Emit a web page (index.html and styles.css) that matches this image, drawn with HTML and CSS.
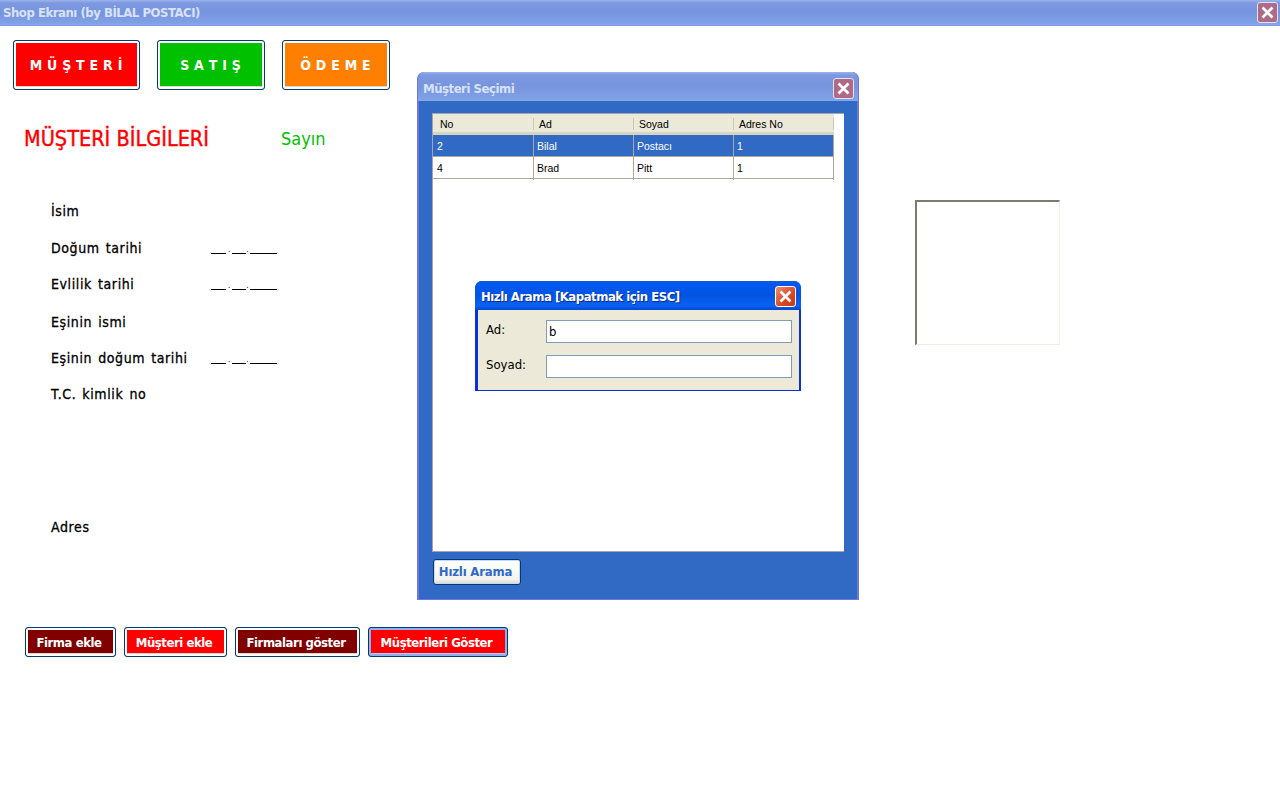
FILE: index.html
```html
<!DOCTYPE html>
<html>
<head>
  <title>Shop Ekranı</title>
  <meta charset="utf-8">
  <link rel="stylesheet" href="styles.css">
</head>
<body>
  <div class="titlebar inactive main-title">
    <span class="title-text">Shop Ekranı (by BİLAL POSTACI)</span>
    <span class="close-btn faded"><svg viewBox="0 0 12 12"><path d="M2 2l8 8M10 2l-8 8"/></svg></span>
  </div>

  <div class="tabs">
    <div class="btn tab red">M Ü Ş T E R İ</div>
    <div class="btn tab green">S A T I Ş</div>
    <div class="btn tab orange">Ö D E M E</div>
  </div>

  <div class="heading">
    <div class="heading-title">MÜŞTERİ BİLGİLERİ</div>
    <div class="heading-hello">Sayın</div>
  </div>

  <div class="form">
    <div class="form-row r1"><span class="label">İsim</span></div>
    <div class="form-row r2"><span class="label">Doğum tarihi</span><span class="date"><i></i>.<i></i>.<i class="year"></i></span></div>
    <div class="form-row r3"><span class="label">Evlilik tarihi</span><span class="date"><i></i>.<i></i>.<i class="year"></i></span></div>
    <div class="form-row r4"><span class="label">Eşinin ismi</span></div>
    <div class="form-row r5"><span class="label">Eşinin doğum tarihi</span><span class="date"><i></i>.<i></i>.<i class="year"></i></span></div>
    <div class="form-row r6"><span class="label">T.C. kimlik no</span></div>
    <div class="form-row r7"><span class="label">Adres</span></div>
  </div>

  <div class="actions">
    <div class="btn small maroon w91">Firma ekle</div>
    <div class="btn small red w103">Müşteri ekle</div>
    <div class="btn small maroon w125">Firmaları göster</div>
    <div class="btn small red w140 focused">Müşterileri Göster</div>
  </div>

  <div class="photo"></div>

  <div class="window select-window">
    <div class="titlebar inactive">
      <span class="title-text">Müşteri Seçimi</span>
      <span class="close-btn faded"><svg viewBox="0 0 12 12"><path d="M2 2l8 8M10 2l-8 8"/></svg></span>
    </div>
    <div class="select-body">
      <div class="grid-panel">
        <div class="grid-row grid-head">
          <div>No</div><div>Ad</div><div>Soyad</div><div>Adres No</div>
        </div>
        <div class="grid-row grid-cells selected">
          <div>2</div><div>Bilal</div><div>Postacı</div><div>1</div>
        </div>
        <div class="grid-row grid-cells">
          <div>4</div><div>Brad</div><div>Pitt</div><div>1</div>
        </div>
      </div>
      <div class="search-btn">Hızlı Arama</div>
    </div>
  </div>

  <div class="window search-window">
    <div class="titlebar active">
      <span class="title-text">Hızlı Arama [Kapatmak için ESC]</span>
      <span class="close-btn hot"><svg viewBox="0 0 12 12"><path d="M2 2l8 8M10 2l-8 8"/></svg></span>
    </div>
    <div class="search-body">
      <div class="search-row"><label>Ad:</label><div class="input">b</div></div>
      <div class="search-row"><label>Soyad:</label><div class="input"></div></div>
    </div>
  </div>
</body>
</html>
```

FILE: styles.css
```css
html, body {
  margin: 0;
  padding: 0;
}

body {
  position: relative;
  width: 1280px;
  height: 800px;
  overflow: hidden;
  background: #fff;
  font-family: "DejaVu Sans Condensed", "DejaVu Sans", sans-serif;
  font-size: 13px;
  color: #000;
}

/* title bars */
.titlebar {
  display: flex;
  flex-shrink: 0;
  align-items: center;
  justify-content: space-between;
  box-sizing: border-box;
}

.inactive {
  background: linear-gradient(#9db4ec 0, #7d98e0 3px, #7794de 50%, #7fa0e6 90%, #8aa6e8 100%);
  color: #d8e2f8;
}

.active {
  background: linear-gradient(#0a5ae6 0, #0058ee 4px, #0054e3 50%, #0a62f2 85%, #0348d0 100%);
  color: #fff;
}

.main-title {
  height: 26px;
  padding: 0 2px 1px 3px;
  border-bottom: 1px solid #7f9be2;
}

.title-text {
  font-weight: bold;
  font-size: 13px;
  letter-spacing: -0.47px;
}

.close-btn {
  display: flex;
  align-items: center;
  justify-content: center;
  box-sizing: border-box;
  width: 21px;
  height: 21px;
  border: 1px solid #dfe4f6;
  border-radius: 3px;
}

.close-btn svg {
  width: 15px;
  height: 15px;
  fill: none;
  stroke: #fff;
  stroke-width: 2.2;
}

.faded {
  background: #b06a88;
}

.hot {
  background: linear-gradient(135deg, #ea8f72, #d9461f 60%, #c23a18);
  border-color: #fff;
}

/* buttons */
.btn {
  display: flex;
  align-items: center;
  justify-content: center;
  box-sizing: border-box;
  border: 1px solid #003c74;
  border-radius: 3px;
  box-shadow: inset 0 0 0 2px #fff, inset 0 -2px 0 1px #dcd8c8;
  color: #fff;
  font-weight: bold;
}

.red { background: #f00; }
.green { background: #00c000; }
.orange { background: #ff8000; }
.maroon { background: #800000; }

.tabs {
  display: flex;
  gap: 17px;
  padding: 14px 0 0 13px;
}

.tab {
  width: 108px;
  height: 50px;
  font-size: 14px;
  word-spacing: 0.5px;
  padding: 0 1px 1px 0;
}

.tab:first-child {
  width: 127px;
}

.heading {
  display: flex;
  align-items: center;
  padding: 35px 0 0 24px;
  height: 26px;
}

.heading-title {
  width: 257px;
  color: #f00;
  font-size: 21.5px;
  -webkit-text-stroke: 0.4px #f00;
  white-space: nowrap;
}

.heading-hello {
  color: #00bf00;
  font-size: 18px;
}

/* customer form */
.form {
  padding: 50px 0 0 51px;
}

.form-row {
  display: flex;
  align-items: center;
  height: 20px;
  font-size: 14px;
}

.r2 { margin-top: 17px; }
.r3 { margin-top: 16px; }
.r4 { margin-top: 18px; }
.r5 { margin-top: 16px; }
.r6 { margin-top: 16px; }
.r7 { margin-top: 113px; }

.label {
  width: 160px;
  letter-spacing: 0.6px;
  word-spacing: 1.5px;
  -webkit-text-stroke: 0.3px #000;
  white-space: nowrap;
}

.date {
  display: flex;
  align-items: flex-end;
  font-size: 8px;
  line-height: 8px;
  height: 8px;
  margin-top: 4px;
}

.date i {
  display: block;
  width: 15px;
  height: 1px;
  background: #000;
  margin: 0 2px;
}

.date i:first-child {
  margin-left: 0;
}

.date i:nth-of-type(2) {
  width: 14px;
  margin-right: 0;
}

.date i.year {
  width: 27px;
  margin: 0 0 0 1px;
}

.actions {
  display: flex;
  gap: 8px;
  padding: 90px 0 0 25px;
}

.small {
  height: 30px;
  padding-right: 3px;
  font-size: 13px;
  letter-spacing: -0.45px;
}

.w91 { width: 91px; }
.w103 { width: 103px; }
.w125 { width: 125px; }
.w140 { width: 140px; }

.focused {
  box-shadow: inset 0 0 0 2px #8fb0f0, inset 0 -2px 0 1px #b8c8f0;
}

.photo {
  position: absolute;
  left: 915px;
  top: 200px;
  width: 145px;
  height: 145px;
  box-sizing: border-box;
  border-style: solid;
  border-width: 2px 1px 1px 2px;
  border-color: #7d7c6c #f1efe2 #f1efe2 #7d7c6c;
  background: #fff;
}

/* floating windows */
.window {
  position: absolute;
  box-sizing: border-box;
}

.select-window {
  left: 417px;
  top: 72px;
  width: 442px;
  height: 528px;
  display: flex;
  flex-direction: column;
  border: 1px solid #6f78d8;
  border-top: 0;
  border-radius: 7px 7px 0 0;
  background: #316ac5;
  overflow: hidden;
}

.select-window .titlebar {
  height: 29px;
  padding: 3px 4px 0 5px;
}

.select-body {
  flex: 1;
  padding: 12px 13px 14px 13px;
  border: 1px solid #6f78d8;
  border-width: 0 1px 1px;
}

.grid-panel {
  box-sizing: border-box;
  width: 412px;
  height: 439px;
  background: #fff;
  border: 1px solid #a5a5b0;
  border-width: 1px 0 1px 1px;
}

.grid-row {
  display: grid;
  grid-template-columns: 101px repeat(3, 100px);
  width: 401px;
  font-family: "Liberation Sans", Arial, sans-serif;
  font-size: 10.5px;
}

.grid-head {
  height: 21px;
  background: #ebe9d8;
  border-bottom: 3px solid #d8d4c2;
  box-sizing: border-box;
}

.grid-head div {
  height: 12px;
  margin-top: 4px;
  padding-left: 5px;
  line-height: 12px;
  border-right: 1px solid #cac7b4;
}

.grid-head div:first-child {
  padding-left: 7px;
}

.grid-cells {
  height: 22px;
  box-sizing: border-box;
  border-bottom: 1px solid #aca8a0;
  line-height: 23px;
}

.grid-cells div {
  padding-left: 3px;
  border-right: 1px solid #aca8a0;
}

.grid-cells div:first-child {
  padding-left: 4px;
}

.selected {
  background: #316ac5;
  color: #fff;
}

.search-btn {
  display: flex;
  align-items: center;
  justify-content: center;
  box-sizing: border-box;
  width: 88px;
  height: 26px;
  margin: 7px 0 0 1px;
  padding: 0 3px 2px 0;
  background: linear-gradient(#fff, #f4f4ee 80%, #dcd8c8);
  border: 1px solid #003c74;
  border-radius: 3px;
  box-shadow: inset 0 0 0 1px #c8d8f4;
  color: #316ac5;
  font-weight: bold;
  font-size: 13px;
  letter-spacing: -0.2px;
}

.search-window {
  left: 475px;
  top: 281px;
  width: 326px;
  height: 110px;
  display: flex;
  flex-direction: column;
  border-radius: 7px 7px 0 0;
  background: #0831d9;
  overflow: hidden;
}

.search-window .titlebar {
  height: 29px;
  padding: 2px 5px 1px 6px;
}

.search-window .title-text {
  text-shadow: 1px 1px 0 #0a2a90;
}

.search-body {
  flex: 1;
  margin: 0 2px 3px 3px;
  background: #ece9d8;
  padding: 10px 7px 0 8px;
}

.search-row {
  display: flex;
  align-items: center;
  height: 23px;
  margin-bottom: 12px;
}

.search-row label {
  width: 60px;
  padding-bottom: 4px;
  font-size: 13px;
}

.input {
  box-sizing: border-box;
  width: 246px;
  height: 23px;
  background: #fff;
  border: 1px solid #7f9db9;
  padding-left: 2px;
  font-size: 13px;
  line-height: 21px;
}
```
